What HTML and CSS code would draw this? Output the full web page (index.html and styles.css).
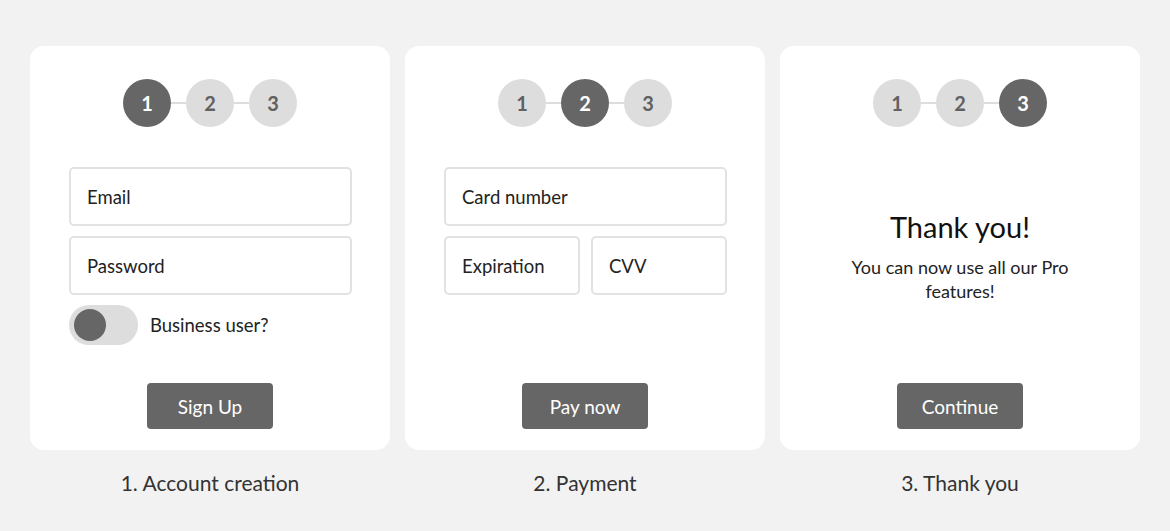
FILE: index.html
```html
<!DOCTYPE html>
<html lang="en">
<head>
<meta charset="utf-8">
<title>Sign up flow</title>
<link rel="stylesheet" href="styles.css">
</head>
<body>
<main class="flow">
  <section class="screen">
    <div class="card">
      <div class="steps">
        <span class="step active">1</span><span class="link"></span>
        <span class="step">2</span><span class="link"></span>
        <span class="step">3</span>
      </div>
      <div class="fields">
        <div class="field">Email</div>
        <div class="field">Password</div>
        <div class="toggle-row">
          <span class="toggle"><span class="knob"></span></span>
          <span class="toggle-label">Business user?</span>
        </div>
      </div>
      <button class="btn">Sign Up</button>
    </div>
    <p class="caption">1. Account creation</p>
  </section>

  <section class="screen">
    <div class="card">
      <div class="steps">
        <span class="step">1</span><span class="link"></span>
        <span class="step active">2</span><span class="link"></span>
        <span class="step">3</span>
      </div>
      <div class="fields">
        <div class="field">Card number</div>
        <div class="field-row">
          <div class="field">Expiration</div>
          <div class="field">CVV</div>
        </div>
      </div>
      <button class="btn">Pay now</button>
    </div>
    <p class="caption">2. Payment</p>
  </section>

  <section class="screen">
    <div class="card">
      <div class="steps">
        <span class="step">1</span><span class="link"></span>
        <span class="step">2</span><span class="link"></span>
        <span class="step active">3</span>
      </div>
      <div class="thanks">
        <h2 class="thanks-title">Thank you!</h2>
        <p class="thanks-text">You can now use all our Pro features!</p>
      </div>
      <button class="btn">Continue</button>
    </div>
    <p class="caption">3. Thank you</p>
  </section>
</main>
</body>
</html>
```

FILE: styles.css
```css
* { box-sizing: border-box; }

html, body {
  margin: 0;
  padding: 0;
  background: #f2f2f2;
  font-family: "Source Sans Pro", Lato, "Liberation Sans", sans-serif;
  color: #222;
}

.flow {
  display: flex;
  gap: 15px;
  padding: 46px 30px 0 30px;
}

.screen {
  width: 360px;
  display: flex;
  flex-direction: column;
  align-items: center;
}

.card {
  width: 360px;
  height: 404px;
  background: #fff;
  border-radius: 14px;
  padding: 33px 39px 21px 39px;
  display: flex;
  flex-direction: column;
  align-items: center;
}

.steps {
  display: flex;
  align-items: center;
  height: 48px;
}

.step {
  width: 48px;
  height: 48px;
  border-radius: 50%;
  background: #dddddd;
  color: #616161;
  font-weight: 700;
  font-size: 20px;
  display: flex;
  align-items: center;
  justify-content: center;
}

.step.active {
  background: #666666;
  color: #fff;
}

.link {
  width: 15px;
  height: 2px;
  background: #dddddd;
}

.fields {
  align-self: flex-start;
  width: calc(100% + 1px);
  margin-top: 40px;
  display: flex;
  flex-direction: column;
  gap: 10px;
}

.field {
  height: 59px;
  border: 2px solid #e2e2e2;
  border-radius: 5px;
  padding: 0 16px;
  display: flex;
  align-items: center;
  font-size: 18.5px;
  color: #222;
}

.field-row {
  display: flex;
  gap: 11px;
}

.field-row .field { flex: 1; }

.toggle-row {
  display: flex;
  align-items: center;
  gap: 12px;
}

.toggle {
  width: 69px;
  height: 40px;
  border-radius: 20px;
  background: #dddddd;
  display: flex;
  align-items: center;
  padding-left: 5px;
}

.knob {
  width: 32px;
  height: 32px;
  border-radius: 50%;
  background: #666;
}

.toggle-label {
  font-size: 18.5px;
  color: #222;
}

.btn {
  margin-top: auto;
  width: 126px;
  height: 46px;
  border: none;
  border-radius: 4px;
  background: #666666;
  color: #fff;
  font-family: inherit;
  font-size: 19px;
  padding: 0;
}

.thanks {
  margin-top: 82px;
  text-align: center;
  width: 240px;
}

.thanks-title {
  margin: 0;
  font-weight: 400;
  font-size: 29px;
  line-height: 36px;
  color: #111;
}

.thanks-text {
  margin: 10px 0 0 0;
  font-size: 18px;
  line-height: 24px;
  color: #222;
}

.caption {
  margin: 20px 0 0 0;
  font-size: 21px;
  line-height: 26px;
  color: #333;
}
```
